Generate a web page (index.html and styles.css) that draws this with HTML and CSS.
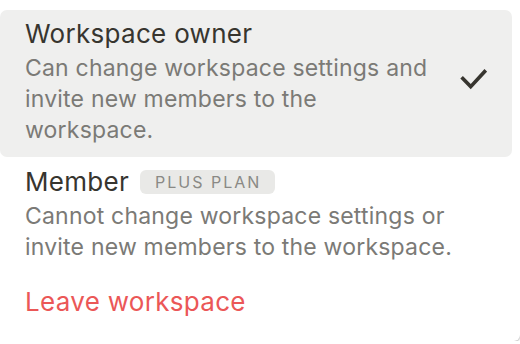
FILE: index.html
```html
<!DOCTYPE html>
<html>
<head>
<meta charset="utf-8">
<link rel="stylesheet" href="styles.css">
</head>
<body>
<div class="menu">
  <div class="item selected">
    <div class="text">
      <div class="title">Workspace owner</div>
      <div class="desc">Can change workspace settings and invite new members to the workspace.</div>
    </div>
    <svg class="check" width="30" height="24" viewBox="0 0 30 24"><path d="M4.6 11.3 L13.7 20.6 L28.8 4.3" fill="none" stroke="#37352f" stroke-width="3.6" stroke-linecap="butt" stroke-linejoin="miter"/></svg>
  </div>
  <div class="item member">
    <div class="text">
      <div class="title">Member <span class="badge">Plus Plan</span></div>
      <div class="desc">Cannot change workspace settings or invite new members to the workspace.</div>
    </div>
  </div>
  <div class="item leave">Leave workspace</div>
</div>
</body>
</html>
```
FILE: styles.css
```css
html, body {
  margin: 0;
  padding: 0;
  background: #ffffff;
}
body {
  font-family: Inter, "Noto Sans", sans-serif;
  -webkit-font-smoothing: antialiased;
}
.menu {
  width: 520px;
  height: 341px;
  box-sizing: border-box;
  padding-top: 10px;
  background: #ffffff;
  border-bottom-right-radius: 6px;
  box-shadow: 0 1px 2px rgba(15, 15, 15, 0.25), 1px 0 2px rgba(15, 15, 15, 0.08);
  display: flex;
  flex-direction: column;
}
.item {
  display: flex;
  align-items: center;
  padding: 0 25px;
  width: 512px;
  box-sizing: border-box;
}
.selected {
  background: #efefee;
  border-radius: 7px;
  height: 147px;
  padding-top: 9px;
  padding-bottom: 11px;
}
.text {
  flex: 1;
}
.title {
  font-size: 26px;
  line-height: 30px;
  letter-spacing: 0.3px;
  color: #37352f;
  display: flex;
  align-items: center;
}
.desc {
  margin-top: 4px;
  font-size: 23px;
  line-height: 31px;
  color: #7b7a76;
  width: 440px;
  letter-spacing: 0.2px;
}
.selected .desc {
  width: 418px;
}
.check {
  flex-shrink: 0;
  margin-top: -9px;
}
.member {
  margin-top: 10px;
}
.badge {
  font-size: 16px;
  font-weight: 400;
  text-transform: uppercase;
  letter-spacing: 2px;
  color: #8a8985;
  background: #e9e9e7;
  border-radius: 6px;
  padding: 0 14px 0 15px;
  line-height: 24px;
  margin-left: 11px;
}
.leave {
  margin-top: 24px;
  font-size: 26px;
  line-height: 30px;
  letter-spacing: 0.3px;
  color: #eb5757;
}
```
